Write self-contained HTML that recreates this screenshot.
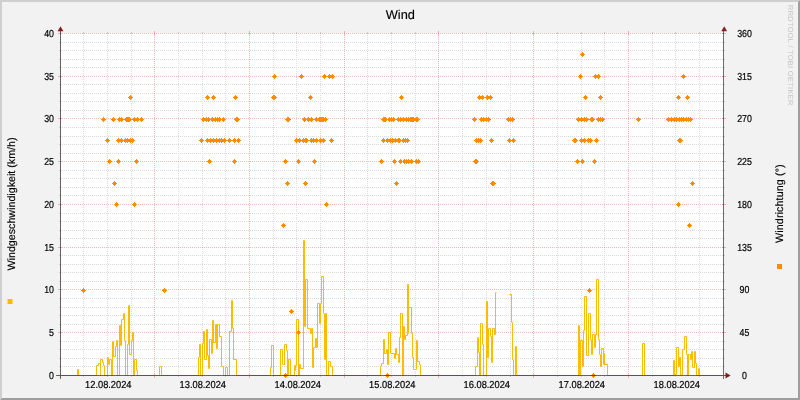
<!DOCTYPE html>
<html lang="de"><head><meta charset="utf-8"><title>Wind</title>
<style>
html,body{margin:0;padding:0;background:#f2f2f2;}
body{width:800px;height:400px;overflow:hidden;}
svg{display:block;transform:translateZ(0);will-change:transform;}
text{font-family:"Liberation Sans", Arial, sans-serif;fill:#000;text-rendering:geometricPrecision;}
.ax{font-size:10.15px;stroke:#000;stroke-width:0.2px;}
.ti{font-size:12.8px;stroke:#000;stroke-width:0.15px;}
.un{font-size:10.7px;stroke:#000;stroke-width:0.15px;}
.wm{font-size:7.4px;fill:#c4c4c4;letter-spacing:0.33px;}
</style></head>
<body>
<svg width="800" height="400" viewBox="0 0 800 400">
<rect x="0" y="0" width="800" height="400" fill="#f2f2f2"/>
<path d="M0 0H800L798 2H2V398L0 400Z" fill="#cfcfcf"/>
<path d="M800 400H0L2 398H798V2L800 0Z" fill="#9e9e9e"/>
<rect x="60" y="33" width="664" height="343" fill="#ffffff"/>
<g shape-rendering="crispEdges" fill="none" stroke-width="1">
<path d="M60.0 366.5H724.0M60.0 358.5H724.0M60.0 349.5H724.0M60.0 341.5H724.0M60.0 324.5H724.0M60.0 315.5H724.0M60.0 307.5H724.0M60.0 298.5H724.0M60.0 281.5H724.0M60.0 272.5H724.0M60.0 264.5H724.0M60.0 255.5H724.0M60.0 238.5H724.0M60.0 230.5H724.0M60.0 221.5H724.0M60.0 213.5H724.0M60.0 195.5H724.0M60.0 187.5H724.0M60.0 178.5H724.0M60.0 170.5H724.0M60.0 153.5H724.0M60.0 144.5H724.0M60.0 136.5H724.0M60.0 127.5H724.0M60.0 110.5H724.0M60.0 101.5H724.0M60.0 93.5H724.0M60.0 84.5H724.0M60.0 67.5H724.0M60.0 59.5H724.0M60.0 50.5H724.0M60.0 42.5H724.0M83.5 33.0V376.0M107.5 33.0V376.0M131.5 33.0V376.0M178.5 33.0V376.0M202.5 33.0V376.0M225.5 33.0V376.0M273.5 33.0V376.0M296.5 33.0V376.0M320.5 33.0V376.0M367.5 33.0V376.0M391.5 33.0V376.0M415.5 33.0V376.0M462.5 33.0V376.0M486.5 33.0V376.0M510.5 33.0V376.0M557.5 33.0V376.0M581.5 33.0V376.0M604.5 33.0V376.0M652.5 33.0V376.0M675.5 33.0V376.0M699.5 33.0V376.0" stroke="#8f8f8f" stroke-opacity="0.31" stroke-dasharray="1 1"/>
<path d="M60.0 375.5H724.0M60.0 332.5H724.0M60.0 289.5H724.0M60.0 247.5H724.0M60.0 204.5H724.0M60.0 161.5H724.0M60.0 118.5H724.0M60.0 76.5H724.0M60.0 33.5H724.0M60.5 33.0V376.0M154.5 33.0V376.0M249.5 33.0V376.0M344.5 33.0V376.0M438.5 33.0V376.0M533.5 33.0V376.0M628.5 33.0V376.0" stroke="#de4f4f" stroke-opacity="0.40" stroke-dasharray="1 1"/>
<path d="M59.0 366.5h2M723.0 366.5h2M59.0 358.5h2M723.0 358.5h2M59.0 349.5h2M723.0 349.5h2M59.0 341.5h2M723.0 341.5h2M59.0 324.5h2M723.0 324.5h2M59.0 315.5h2M723.0 315.5h2M59.0 307.5h2M723.0 307.5h2M59.0 298.5h2M723.0 298.5h2M59.0 281.5h2M723.0 281.5h2M59.0 272.5h2M723.0 272.5h2M59.0 264.5h2M723.0 264.5h2M59.0 255.5h2M723.0 255.5h2M59.0 238.5h2M723.0 238.5h2M59.0 230.5h2M723.0 230.5h2M59.0 221.5h2M723.0 221.5h2M59.0 213.5h2M723.0 213.5h2M59.0 195.5h2M723.0 195.5h2M59.0 187.5h2M723.0 187.5h2M59.0 178.5h2M723.0 178.5h2M59.0 170.5h2M723.0 170.5h2M59.0 153.5h2M723.0 153.5h2M59.0 144.5h2M723.0 144.5h2M59.0 136.5h2M723.0 136.5h2M59.0 127.5h2M723.0 127.5h2M59.0 110.5h2M723.0 110.5h2M59.0 101.5h2M723.0 101.5h2M59.0 93.5h2M723.0 93.5h2M59.0 84.5h2M723.0 84.5h2M59.0 67.5h2M723.0 67.5h2M59.0 59.5h2M723.0 59.5h2M59.0 50.5h2M723.0 50.5h2M59.0 42.5h2M723.0 42.5h2M83.5 32.0v2M83.5 375.0v2M107.5 32.0v2M107.5 375.0v2M131.5 32.0v2M131.5 375.0v2M178.5 32.0v2M178.5 375.0v2M202.5 32.0v2M202.5 375.0v2M225.5 32.0v2M225.5 375.0v2M273.5 32.0v2M273.5 375.0v2M296.5 32.0v2M296.5 375.0v2M320.5 32.0v2M320.5 375.0v2M367.5 32.0v2M367.5 375.0v2M391.5 32.0v2M391.5 375.0v2M415.5 32.0v2M415.5 375.0v2M462.5 32.0v2M462.5 375.0v2M486.5 32.0v2M486.5 375.0v2M510.5 32.0v2M510.5 375.0v2M557.5 32.0v2M557.5 375.0v2M581.5 32.0v2M581.5 375.0v2M604.5 32.0v2M604.5 375.0v2M652.5 32.0v2M652.5 375.0v2M675.5 32.0v2M675.5 375.0v2M699.5 32.0v2M699.5 375.0v2" stroke="#8f8f8f" stroke-opacity="0.34"/>
<path d="M58.0 375.5h4M722.0 375.5h4M58.0 332.5h4M722.0 332.5h4M58.0 289.5h4M722.0 289.5h4M58.0 247.5h4M722.0 247.5h4M58.0 204.5h4M722.0 204.5h4M58.0 161.5h4M722.0 161.5h4M58.0 118.5h4M722.0 118.5h4M58.0 76.5h4M722.0 76.5h4M58.0 33.5h4M722.0 33.5h4M60.5 31.0v4M60.5 374.0v4M154.5 31.0v4M154.5 374.0v4M249.5 31.0v4M249.5 374.0v4M344.5 31.0v4M344.5 374.0v4M438.5 31.0v4M438.5 374.0v4M533.5 31.0v4M533.5 374.0v4M628.5 31.0v4M628.5 374.0v4" stroke="#de4f4f" stroke-opacity="0.40"/>
</g>
<path d="M60.50 375.50 L77.50 375.50 L77.50 369.50 L78.50 369.50 L78.50 375.50 L96.50 375.50 L96.50 365.50 L98.50 365.50 L98.50 363.50 L100.50 363.50 L100.50 375.50 L100.50 375.50 L100.50 359.50 L102.50 359.50 L102.50 362.50 L103.50 362.50 L103.50 365.50 L104.50 365.50 L104.50 375.50 L107.50 375.50 L107.50 357.50 L108.50 357.50 L108.50 364.50 L109.50 364.50 L109.50 359.50 L111.50 359.50 L111.50 375.50 L112.50 375.50 L112.50 341.50 L113.50 341.50 L113.50 356.50 L115.50 356.50 L115.50 346.50 L116.50 346.50 L116.50 340.50 L117.50 340.50 L117.50 375.50 L119.50 375.50 L119.50 325.50 L120.50 325.50 L120.50 345.50 L121.50 345.50 L121.50 319.50 L123.50 319.50 L123.50 313.50 L124.50 313.50 L124.50 340.50 L125.50 340.50 L125.50 375.50 L127.50 375.50 L127.50 344.50 L128.50 344.50 L128.50 305.50 L129.50 305.50 L129.50 354.50 L131.50 354.50 L131.50 340.50 L132.50 340.50 L132.50 332.50 L133.50 332.50 L133.50 375.50 L134.50 375.50 L134.50 359.50 L136.50 359.50 L136.50 370.50 L137.50 370.50 L137.50 375.50 L159.50 375.50 L159.50 366.50 L161.50 366.50 L161.50 375.50 L198.50 375.50 L198.50 357.50 L199.50 357.50 L199.50 344.50 L200.50 344.50 L200.50 375.50 L202.50 375.50 L202.50 343.50 L203.50 343.50 L203.50 331.50 L204.50 331.50 L204.50 359.50 L206.50 359.50 L206.50 329.50 L207.50 329.50 L207.50 355.50 L208.50 355.50 L208.50 368.50 L209.50 368.50 L209.50 339.50 L211.50 339.50 L211.50 353.50 L212.50 353.50 L212.50 320.50 L213.50 320.50 L213.50 342.50 L215.50 342.50 L215.50 324.50 L216.50 324.50 L216.50 348.50 L217.50 348.50 L217.50 324.50 L219.50 324.50 L219.50 336.50 L221.50 336.50 L221.50 349.50 L221.50 349.50 L221.50 366.50 L223.50 366.50 L223.50 375.50 L225.50 375.50 L225.50 367.50 L227.50 367.50 L227.50 375.50 L229.50 375.50 L229.50 331.50 L231.50 331.50 L231.50 300.50 L232.50 300.50 L232.50 328.50 L233.50 328.50 L233.50 359.50 L236.50 359.50 L236.50 375.50 L270.50 375.50 L270.50 367.50 L271.50 367.50 L271.50 345.50 L273.50 345.50 L273.50 375.50 L280.50 375.50 L280.50 349.50 L282.50 349.50 L282.50 364.50 L284.50 364.50 L284.50 344.50 L286.50 344.50 L286.50 350.50 L287.50 350.50 L287.50 375.50 L288.50 375.50 L288.50 359.50 L290.50 359.50 L290.50 375.50 L294.50 375.50 L294.50 365.50 L295.50 365.50 L295.50 370.50 L295.50 370.50 L295.50 365.50 L296.50 365.50 L296.50 319.50 L298.50 319.50 L298.50 375.50 L299.50 375.50 L299.50 364.50 L300.50 364.50 L300.50 368.50 L303.50 368.50 L303.50 240.50 L304.50 240.50 L304.50 326.50 L305.50 326.50 L305.50 279.50 L307.50 279.50 L307.50 328.50 L310.50 328.50 L310.50 333.50 L311.50 333.50 L311.50 328.50 L312.50 328.50 L312.50 367.50 L313.50 367.50 L313.50 347.50 L315.50 347.50 L315.50 338.50 L316.50 338.50 L316.50 347.50 L317.50 347.50 L317.50 303.50 L319.50 303.50 L319.50 323.50 L320.50 323.50 L320.50 303.50 L321.50 303.50 L321.50 276.50 L323.50 276.50 L323.50 313.50 L324.50 313.50 L324.50 359.50 L325.50 359.50 L325.50 313.50 L326.50 313.50 L326.50 375.50 L328.50 375.50 L328.50 366.50 L328.50 366.50 L328.50 361.50 L330.50 361.50 L330.50 366.50 L332.50 366.50 L332.50 375.50 L380.50 375.50 L380.50 366.50 L381.50 366.50 L381.50 363.50 L383.50 363.50 L383.50 339.50 L384.50 339.50 L384.50 353.50 L386.50 353.50 L386.50 349.50 L387.50 349.50 L387.50 364.50 L388.50 364.50 L388.50 332.50 L390.50 332.50 L390.50 353.50 L394.50 353.50 L394.50 358.50 L395.50 358.50 L395.50 348.50 L396.50 348.50 L396.50 354.50 L398.50 354.50 L398.50 362.50 L399.50 362.50 L399.50 337.50 L400.50 337.50 L400.50 313.50 L402.50 313.50 L402.50 375.50 L403.50 375.50 L403.50 326.50 L404.50 326.50 L404.50 339.50 L405.50 339.50 L405.50 335.50 L407.50 335.50 L407.50 284.50 L408.50 284.50 L408.50 333.50 L408.50 333.50 L408.50 307.50 L411.50 307.50 L411.50 333.50 L412.50 333.50 L412.50 357.50 L413.50 357.50 L413.50 369.50 L416.50 369.50 L416.50 340.50 L417.50 340.50 L417.50 361.50 L419.50 361.50 L419.50 364.50 L420.50 364.50 L420.50 375.50 L475.50 375.50 L475.50 366.50 L477.50 366.50 L477.50 337.50 L478.50 337.50 L478.50 352.50 L479.50 352.50 L479.50 375.50 L480.50 375.50 L480.50 323.50 L482.50 323.50 L482.50 344.50 L483.50 344.50 L483.50 375.50 L486.50 375.50 L486.50 301.50 L487.50 301.50 L487.50 357.50 L488.50 357.50 L488.50 328.50 L490.50 328.50 L490.50 336.50 L491.50 336.50 L491.50 362.50 L492.50 362.50 L492.50 328.50 L494.50 328.50 L494.50 334.50 L495.50 334.50 L495.50 292.50 L496.50 292.50 M509.50 294.50 L511.50 294.50 L511.50 322.50 L512.50 322.50 L512.50 359.50 L513.50 359.50 L513.50 375.50 L515.50 375.50 L515.50 346.50 L516.50 346.50 L516.50 374.50 L517.50 374.50 L517.50 375.50 L578.50 375.50 L578.50 325.50 L579.50 325.50 L579.50 375.50 L580.50 375.50 L580.50 340.50 L582.50 340.50 L582.50 366.50 L583.50 366.50 L583.50 330.50 L584.50 330.50 L584.50 296.50 L586.50 296.50 L586.50 355.50 L588.50 355.50 L588.50 313.50 L590.50 313.50 L590.50 339.50 L591.50 339.50 L591.50 354.50 L592.50 354.50 L592.50 334.50 L594.50 334.50 L594.50 347.50 L595.50 347.50 L595.50 334.50 L596.50 334.50 L596.50 279.50 L598.50 279.50 L598.50 339.50 L599.50 339.50 L599.50 354.50 L600.50 354.50 L600.50 366.50 L601.50 366.50 L601.50 348.50 L603.50 348.50 L603.50 364.50 L604.50 364.50 L604.50 353.50 L604.50 353.50 L604.50 364.50 L607.50 364.50 L607.50 375.50 L642.50 375.50 L642.50 343.50 L644.50 343.50 L644.50 375.50 L673.50 375.50 L673.50 360.50 L674.50 360.50 L674.50 374.50 L676.50 374.50 L676.50 347.50 L678.50 347.50 L678.50 366.50 L679.50 366.50 L679.50 357.50 L680.50 357.50 L680.50 374.50 L682.50 374.50 L682.50 354.50 L682.50 354.50 L682.50 349.50 L684.50 349.50 L684.50 336.50 L686.50 336.50 L686.50 354.50 L687.50 354.50 L687.50 375.50 L688.50 375.50 L688.50 354.50 L690.50 354.50 L690.50 359.50 L691.50 359.50 L691.50 351.50 L692.50 351.50 L692.50 367.50 L694.50 367.50 L694.50 351.50 L695.50 351.50 L695.50 363.50 L696.50 363.50 L696.50 375.50 L698.50 375.50 L698.50 368.50 L699.50 368.50 L699.50 375.50 L723.50 375.50" fill="none" stroke="#ffbb00" stroke-width="1" stroke-linejoin="miter" stroke-linecap="butt"/>
<path d="M580.0 54.0h5v1h-5zM581.0 53.0h3v3h-3zM582.0 52.0h1v5h-1zM272.0 76.0h5v1h-5zM273.0 75.0h3v3h-3zM274.0 74.0h1v5h-1zM299.0 76.0h5v1h-5zM300.0 75.0h3v3h-3zM301.0 74.0h1v5h-1zM322.0 76.0h5v1h-5zM323.0 75.0h3v3h-3zM324.0 74.0h1v5h-1zM327.0 76.0h5v1h-5zM328.0 75.0h3v3h-3zM329.0 74.0h1v5h-1zM330.0 76.0h5v1h-5zM331.0 75.0h3v3h-3zM332.0 74.0h1v5h-1zM578.0 76.0h5v1h-5zM579.0 75.0h3v3h-3zM580.0 74.0h1v5h-1zM593.0 76.0h5v1h-5zM594.0 75.0h3v3h-3zM595.0 74.0h1v5h-1zM596.0 76.0h5v1h-5zM597.0 75.0h3v3h-3zM598.0 74.0h1v5h-1zM681.0 76.0h5v1h-5zM682.0 75.0h3v3h-3zM683.0 74.0h1v5h-1zM128.0 97.0h5v1h-5zM129.0 96.0h3v3h-3zM130.0 95.0h1v5h-1zM205.0 97.0h5v1h-5zM206.0 96.0h3v3h-3zM207.0 95.0h1v5h-1zM211.0 97.0h5v1h-5zM212.0 96.0h3v3h-3zM213.0 95.0h1v5h-1zM233.0 97.0h5v1h-5zM234.0 96.0h3v3h-3zM235.0 95.0h1v5h-1zM271.0 97.0h5v1h-5zM272.0 96.0h3v3h-3zM273.0 95.0h1v5h-1zM272.0 97.0h5v1h-5zM273.0 96.0h3v3h-3zM274.0 95.0h1v5h-1zM308.0 97.0h5v1h-5zM309.0 96.0h3v3h-3zM310.0 95.0h1v5h-1zM399.0 97.0h5v1h-5zM400.0 96.0h3v3h-3zM401.0 95.0h1v5h-1zM477.0 97.0h5v1h-5zM478.0 96.0h3v3h-3zM479.0 95.0h1v5h-1zM480.0 97.0h5v1h-5zM481.0 96.0h3v3h-3zM482.0 95.0h1v5h-1zM485.0 97.0h5v1h-5zM486.0 96.0h3v3h-3zM487.0 95.0h1v5h-1zM488.0 97.0h5v1h-5zM489.0 96.0h3v3h-3zM490.0 95.0h1v5h-1zM583.0 97.0h5v1h-5zM584.0 96.0h3v3h-3zM585.0 95.0h1v5h-1zM598.0 97.0h5v1h-5zM599.0 96.0h3v3h-3zM600.0 95.0h1v5h-1zM676.0 97.0h5v1h-5zM677.0 96.0h3v3h-3zM678.0 95.0h1v5h-1zM685.0 97.0h5v1h-5zM686.0 96.0h3v3h-3zM687.0 95.0h1v5h-1zM101.0 119.0h5v1h-5zM102.0 118.0h3v3h-3zM103.0 117.0h1v5h-1zM111.0 119.0h5v1h-5zM112.0 118.0h3v3h-3zM113.0 117.0h1v5h-1zM117.0 119.0h5v1h-5zM118.0 118.0h3v3h-3zM119.0 117.0h1v5h-1zM119.0 119.0h5v1h-5zM120.0 118.0h3v3h-3zM121.0 117.0h1v5h-1zM124.0 119.0h5v1h-5zM125.0 118.0h3v3h-3zM126.0 117.0h1v5h-1zM125.0 119.0h5v1h-5zM126.0 118.0h3v3h-3zM127.0 117.0h1v5h-1zM126.0 119.0h5v1h-5zM127.0 118.0h3v3h-3zM128.0 117.0h1v5h-1zM127.0 119.0h5v1h-5zM128.0 118.0h3v3h-3zM129.0 117.0h1v5h-1zM132.0 119.0h5v1h-5zM133.0 118.0h3v3h-3zM134.0 117.0h1v5h-1zM135.0 119.0h5v1h-5zM136.0 118.0h3v3h-3zM137.0 117.0h1v5h-1zM139.0 119.0h5v1h-5zM140.0 118.0h3v3h-3zM141.0 117.0h1v5h-1zM201.0 119.0h5v1h-5zM202.0 118.0h3v3h-3zM203.0 117.0h1v5h-1zM204.0 119.0h5v1h-5zM205.0 118.0h3v3h-3zM206.0 117.0h1v5h-1zM206.0 119.0h5v1h-5zM207.0 118.0h3v3h-3zM208.0 117.0h1v5h-1zM210.0 119.0h5v1h-5zM211.0 118.0h3v3h-3zM212.0 117.0h1v5h-1zM213.0 119.0h5v1h-5zM214.0 118.0h3v3h-3zM215.0 117.0h1v5h-1zM215.0 119.0h5v1h-5zM216.0 118.0h3v3h-3zM217.0 117.0h1v5h-1zM217.0 119.0h5v1h-5zM218.0 118.0h3v3h-3zM219.0 117.0h1v5h-1zM221.0 119.0h5v1h-5zM222.0 118.0h3v3h-3zM223.0 117.0h1v5h-1zM234.0 119.0h5v1h-5zM235.0 118.0h3v3h-3zM236.0 117.0h1v5h-1zM235.0 119.0h5v1h-5zM236.0 118.0h3v3h-3zM237.0 117.0h1v5h-1zM285.0 119.0h5v1h-5zM286.0 118.0h3v3h-3zM287.0 117.0h1v5h-1zM286.0 119.0h5v1h-5zM287.0 118.0h3v3h-3zM288.0 117.0h1v5h-1zM302.0 119.0h5v1h-5zM303.0 118.0h3v3h-3zM304.0 117.0h1v5h-1zM306.0 119.0h5v1h-5zM307.0 118.0h3v3h-3zM308.0 117.0h1v5h-1zM309.0 119.0h5v1h-5zM310.0 118.0h3v3h-3zM311.0 117.0h1v5h-1zM314.0 119.0h5v1h-5zM315.0 118.0h3v3h-3zM316.0 117.0h1v5h-1zM317.0 119.0h5v1h-5zM318.0 118.0h3v3h-3zM319.0 117.0h1v5h-1zM318.0 119.0h5v1h-5zM319.0 118.0h3v3h-3zM320.0 117.0h1v5h-1zM319.0 119.0h5v1h-5zM320.0 118.0h3v3h-3zM321.0 117.0h1v5h-1zM320.0 119.0h5v1h-5zM321.0 118.0h3v3h-3zM322.0 117.0h1v5h-1zM321.0 119.0h5v1h-5zM322.0 118.0h3v3h-3zM323.0 117.0h1v5h-1zM323.0 119.0h5v1h-5zM324.0 118.0h3v3h-3zM325.0 117.0h1v5h-1zM381.0 119.0h5v1h-5zM382.0 118.0h3v3h-3zM383.0 117.0h1v5h-1zM382.0 119.0h5v1h-5zM383.0 118.0h3v3h-3zM384.0 117.0h1v5h-1zM383.0 119.0h5v1h-5zM384.0 118.0h3v3h-3zM385.0 117.0h1v5h-1zM387.0 119.0h5v1h-5zM388.0 118.0h3v3h-3zM389.0 117.0h1v5h-1zM389.0 119.0h5v1h-5zM390.0 118.0h3v3h-3zM391.0 117.0h1v5h-1zM391.0 119.0h5v1h-5zM392.0 118.0h3v3h-3zM393.0 117.0h1v5h-1zM396.0 119.0h5v1h-5zM397.0 118.0h3v3h-3zM398.0 117.0h1v5h-1zM398.0 119.0h5v1h-5zM399.0 118.0h3v3h-3zM400.0 117.0h1v5h-1zM401.0 119.0h5v1h-5zM402.0 118.0h3v3h-3zM403.0 117.0h1v5h-1zM404.0 119.0h5v1h-5zM405.0 118.0h3v3h-3zM406.0 117.0h1v5h-1zM406.0 119.0h5v1h-5zM407.0 118.0h3v3h-3zM408.0 117.0h1v5h-1zM408.0 119.0h5v1h-5zM409.0 118.0h3v3h-3zM410.0 117.0h1v5h-1zM409.0 119.0h5v1h-5zM410.0 118.0h3v3h-3zM411.0 117.0h1v5h-1zM410.0 119.0h5v1h-5zM411.0 118.0h3v3h-3zM412.0 117.0h1v5h-1zM411.0 119.0h5v1h-5zM412.0 118.0h3v3h-3zM413.0 117.0h1v5h-1zM414.0 119.0h5v1h-5zM415.0 118.0h3v3h-3zM416.0 117.0h1v5h-1zM415.0 119.0h5v1h-5zM416.0 118.0h3v3h-3zM417.0 117.0h1v5h-1zM472.0 119.0h5v1h-5zM473.0 118.0h3v3h-3zM474.0 117.0h1v5h-1zM479.0 119.0h5v1h-5zM480.0 118.0h3v3h-3zM481.0 117.0h1v5h-1zM481.0 119.0h5v1h-5zM482.0 118.0h3v3h-3zM483.0 117.0h1v5h-1zM484.0 119.0h5v1h-5zM485.0 118.0h3v3h-3zM486.0 117.0h1v5h-1zM486.0 119.0h5v1h-5zM487.0 118.0h3v3h-3zM488.0 117.0h1v5h-1zM506.0 119.0h5v1h-5zM507.0 118.0h3v3h-3zM508.0 117.0h1v5h-1zM508.0 119.0h5v1h-5zM509.0 118.0h3v3h-3zM510.0 117.0h1v5h-1zM510.0 119.0h5v1h-5zM511.0 118.0h3v3h-3zM512.0 117.0h1v5h-1zM576.0 119.0h5v1h-5zM577.0 118.0h3v3h-3zM578.0 117.0h1v5h-1zM579.0 119.0h5v1h-5zM580.0 118.0h3v3h-3zM581.0 117.0h1v5h-1zM582.0 119.0h5v1h-5zM583.0 118.0h3v3h-3zM584.0 117.0h1v5h-1zM584.0 119.0h5v1h-5zM585.0 118.0h3v3h-3zM586.0 117.0h1v5h-1zM589.0 119.0h5v1h-5zM590.0 118.0h3v3h-3zM591.0 117.0h1v5h-1zM590.0 119.0h5v1h-5zM591.0 118.0h3v3h-3zM592.0 117.0h1v5h-1zM596.0 119.0h5v1h-5zM597.0 118.0h3v3h-3zM598.0 117.0h1v5h-1zM598.0 119.0h5v1h-5zM599.0 118.0h3v3h-3zM600.0 117.0h1v5h-1zM600.0 119.0h5v1h-5zM601.0 118.0h3v3h-3zM602.0 117.0h1v5h-1zM636.0 119.0h5v1h-5zM637.0 118.0h3v3h-3zM638.0 117.0h1v5h-1zM666.0 119.0h5v1h-5zM667.0 118.0h3v3h-3zM668.0 117.0h1v5h-1zM669.0 119.0h5v1h-5zM670.0 118.0h3v3h-3zM671.0 117.0h1v5h-1zM672.0 119.0h5v1h-5zM673.0 118.0h3v3h-3zM674.0 117.0h1v5h-1zM674.0 119.0h5v1h-5zM675.0 118.0h3v3h-3zM676.0 117.0h1v5h-1zM677.0 119.0h5v1h-5zM678.0 118.0h3v3h-3zM679.0 117.0h1v5h-1zM679.0 119.0h5v1h-5zM680.0 118.0h3v3h-3zM681.0 117.0h1v5h-1zM681.0 119.0h5v1h-5zM682.0 118.0h3v3h-3zM683.0 117.0h1v5h-1zM684.0 119.0h5v1h-5zM685.0 118.0h3v3h-3zM686.0 117.0h1v5h-1zM686.0 119.0h5v1h-5zM687.0 118.0h3v3h-3zM688.0 117.0h1v5h-1zM688.0 119.0h5v1h-5zM689.0 118.0h3v3h-3zM690.0 117.0h1v5h-1zM105.0 140.0h5v1h-5zM106.0 139.0h3v3h-3zM107.0 138.0h1v5h-1zM116.0 140.0h5v1h-5zM117.0 139.0h3v3h-3zM118.0 138.0h1v5h-1zM119.0 140.0h5v1h-5zM120.0 139.0h3v3h-3zM121.0 138.0h1v5h-1zM123.0 140.0h5v1h-5zM124.0 139.0h3v3h-3zM125.0 138.0h1v5h-1zM125.0 140.0h5v1h-5zM126.0 139.0h3v3h-3zM127.0 138.0h1v5h-1zM128.0 140.0h5v1h-5zM129.0 139.0h3v3h-3zM130.0 138.0h1v5h-1zM130.0 140.0h5v1h-5zM131.0 139.0h3v3h-3zM132.0 138.0h1v5h-1zM199.0 140.0h5v1h-5zM200.0 139.0h3v3h-3zM201.0 138.0h1v5h-1zM205.0 140.0h5v1h-5zM206.0 139.0h3v3h-3zM207.0 138.0h1v5h-1zM208.0 140.0h5v1h-5zM209.0 139.0h3v3h-3zM210.0 138.0h1v5h-1zM211.0 140.0h5v1h-5zM212.0 139.0h3v3h-3zM213.0 138.0h1v5h-1zM214.0 140.0h5v1h-5zM215.0 139.0h3v3h-3zM216.0 138.0h1v5h-1zM217.0 140.0h5v1h-5zM218.0 139.0h3v3h-3zM219.0 138.0h1v5h-1zM219.0 140.0h5v1h-5zM220.0 139.0h3v3h-3zM221.0 138.0h1v5h-1zM222.0 140.0h5v1h-5zM223.0 139.0h3v3h-3zM224.0 138.0h1v5h-1zM227.0 140.0h5v1h-5zM228.0 139.0h3v3h-3zM229.0 138.0h1v5h-1zM232.0 140.0h5v1h-5zM233.0 139.0h3v3h-3zM234.0 138.0h1v5h-1zM236.0 140.0h5v1h-5zM237.0 139.0h3v3h-3zM238.0 138.0h1v5h-1zM294.0 140.0h5v1h-5zM295.0 139.0h3v3h-3zM296.0 138.0h1v5h-1zM297.0 140.0h5v1h-5zM298.0 139.0h3v3h-3zM299.0 138.0h1v5h-1zM301.0 140.0h5v1h-5zM302.0 139.0h3v3h-3zM303.0 138.0h1v5h-1zM303.0 140.0h5v1h-5zM304.0 139.0h3v3h-3zM305.0 138.0h1v5h-1zM304.0 140.0h5v1h-5zM305.0 139.0h3v3h-3zM306.0 138.0h1v5h-1zM309.0 140.0h5v1h-5zM310.0 139.0h3v3h-3zM311.0 138.0h1v5h-1zM311.0 140.0h5v1h-5zM312.0 139.0h3v3h-3zM313.0 138.0h1v5h-1zM314.0 140.0h5v1h-5zM315.0 139.0h3v3h-3zM316.0 138.0h1v5h-1zM318.0 140.0h5v1h-5zM319.0 139.0h3v3h-3zM320.0 138.0h1v5h-1zM321.0 140.0h5v1h-5zM322.0 139.0h3v3h-3zM323.0 138.0h1v5h-1zM329.0 140.0h5v1h-5zM330.0 139.0h3v3h-3zM331.0 138.0h1v5h-1zM381.0 140.0h5v1h-5zM382.0 139.0h3v3h-3zM383.0 138.0h1v5h-1zM385.0 140.0h5v1h-5zM386.0 139.0h3v3h-3zM387.0 138.0h1v5h-1zM388.0 140.0h5v1h-5zM389.0 139.0h3v3h-3zM390.0 138.0h1v5h-1zM390.0 140.0h5v1h-5zM391.0 139.0h3v3h-3zM392.0 138.0h1v5h-1zM393.0 140.0h5v1h-5zM394.0 139.0h3v3h-3zM395.0 138.0h1v5h-1zM396.0 140.0h5v1h-5zM397.0 139.0h3v3h-3zM398.0 138.0h1v5h-1zM397.0 140.0h5v1h-5zM398.0 139.0h3v3h-3zM399.0 138.0h1v5h-1zM401.0 140.0h5v1h-5zM402.0 139.0h3v3h-3zM403.0 138.0h1v5h-1zM403.0 140.0h5v1h-5zM404.0 139.0h3v3h-3zM405.0 138.0h1v5h-1zM405.0 140.0h5v1h-5zM406.0 139.0h3v3h-3zM407.0 138.0h1v5h-1zM474.0 140.0h5v1h-5zM475.0 139.0h3v3h-3zM476.0 138.0h1v5h-1zM476.0 140.0h5v1h-5zM477.0 139.0h3v3h-3zM478.0 138.0h1v5h-1zM478.0 140.0h5v1h-5zM479.0 139.0h3v3h-3zM480.0 138.0h1v5h-1zM489.0 140.0h5v1h-5zM490.0 139.0h3v3h-3zM491.0 138.0h1v5h-1zM507.0 140.0h5v1h-5zM508.0 139.0h3v3h-3zM509.0 138.0h1v5h-1zM511.0 140.0h5v1h-5zM512.0 139.0h3v3h-3zM513.0 138.0h1v5h-1zM572.0 140.0h5v1h-5zM573.0 139.0h3v3h-3zM574.0 138.0h1v5h-1zM573.0 140.0h5v1h-5zM574.0 139.0h3v3h-3zM575.0 138.0h1v5h-1zM579.0 140.0h5v1h-5zM580.0 139.0h3v3h-3zM581.0 138.0h1v5h-1zM582.0 140.0h5v1h-5zM583.0 139.0h3v3h-3zM584.0 138.0h1v5h-1zM586.0 140.0h5v1h-5zM587.0 139.0h3v3h-3zM588.0 138.0h1v5h-1zM588.0 140.0h5v1h-5zM589.0 139.0h3v3h-3zM590.0 138.0h1v5h-1zM594.0 140.0h5v1h-5zM595.0 139.0h3v3h-3zM596.0 138.0h1v5h-1zM677.0 140.0h5v1h-5zM678.0 139.0h3v3h-3zM679.0 138.0h1v5h-1zM678.0 140.0h5v1h-5zM679.0 139.0h3v3h-3zM680.0 138.0h1v5h-1zM107.0 161.0h5v1h-5zM108.0 160.0h3v3h-3zM109.0 159.0h1v5h-1zM116.0 161.0h5v1h-5zM117.0 160.0h3v3h-3zM118.0 159.0h1v5h-1zM134.0 161.0h5v1h-5zM135.0 160.0h3v3h-3zM136.0 159.0h1v5h-1zM207.0 161.0h5v1h-5zM208.0 160.0h3v3h-3zM209.0 159.0h1v5h-1zM232.0 161.0h5v1h-5zM233.0 160.0h3v3h-3zM234.0 159.0h1v5h-1zM283.0 161.0h5v1h-5zM284.0 160.0h3v3h-3zM285.0 159.0h1v5h-1zM296.0 161.0h5v1h-5zM297.0 160.0h3v3h-3zM298.0 159.0h1v5h-1zM312.0 161.0h5v1h-5zM313.0 160.0h3v3h-3zM314.0 159.0h1v5h-1zM379.0 161.0h5v1h-5zM380.0 160.0h3v3h-3zM381.0 159.0h1v5h-1zM392.0 161.0h5v1h-5zM393.0 160.0h3v3h-3zM394.0 159.0h1v5h-1zM398.0 161.0h5v1h-5zM399.0 160.0h3v3h-3zM400.0 159.0h1v5h-1zM402.0 161.0h5v1h-5zM403.0 160.0h3v3h-3zM404.0 159.0h1v5h-1zM404.0 161.0h5v1h-5zM405.0 160.0h3v3h-3zM406.0 159.0h1v5h-1zM406.0 161.0h5v1h-5zM407.0 160.0h3v3h-3zM408.0 159.0h1v5h-1zM409.0 161.0h5v1h-5zM410.0 160.0h3v3h-3zM411.0 159.0h1v5h-1zM414.0 161.0h5v1h-5zM415.0 160.0h3v3h-3zM416.0 159.0h1v5h-1zM416.0 161.0h5v1h-5zM417.0 160.0h3v3h-3zM418.0 159.0h1v5h-1zM473.0 161.0h5v1h-5zM474.0 160.0h3v3h-3zM475.0 159.0h1v5h-1zM474.0 161.0h5v1h-5zM475.0 160.0h3v3h-3zM476.0 159.0h1v5h-1zM575.0 161.0h5v1h-5zM576.0 160.0h3v3h-3zM577.0 159.0h1v5h-1zM580.0 161.0h5v1h-5zM581.0 160.0h3v3h-3zM582.0 159.0h1v5h-1zM592.0 161.0h5v1h-5zM593.0 160.0h3v3h-3zM594.0 159.0h1v5h-1zM112.0 183.0h5v1h-5zM113.0 182.0h3v3h-3zM114.0 181.0h1v5h-1zM285.0 183.0h5v1h-5zM286.0 182.0h3v3h-3zM287.0 181.0h1v5h-1zM303.0 183.0h5v1h-5zM304.0 182.0h3v3h-3zM305.0 181.0h1v5h-1zM394.0 183.0h5v1h-5zM395.0 182.0h3v3h-3zM396.0 181.0h1v5h-1zM490.0 183.0h5v1h-5zM491.0 182.0h3v3h-3zM492.0 181.0h1v5h-1zM491.0 183.0h5v1h-5zM492.0 182.0h3v3h-3zM493.0 181.0h1v5h-1zM690.0 183.0h5v1h-5zM691.0 182.0h3v3h-3zM692.0 181.0h1v5h-1zM114.0 204.0h5v1h-5zM115.0 203.0h3v3h-3zM116.0 202.0h1v5h-1zM132.0 204.0h5v1h-5zM133.0 203.0h3v3h-3zM134.0 202.0h1v5h-1zM324.0 204.0h5v1h-5zM325.0 203.0h3v3h-3zM326.0 202.0h1v5h-1zM676.0 204.0h5v1h-5zM677.0 203.0h3v3h-3zM678.0 202.0h1v5h-1zM281.0 225.0h5v1h-5zM282.0 224.0h3v3h-3zM283.0 223.0h1v5h-1zM687.0 225.0h5v1h-5zM688.0 224.0h3v3h-3zM689.0 223.0h1v5h-1zM81.0 290.0h5v1h-5zM82.0 289.0h3v3h-3zM83.0 288.0h1v5h-1zM162.0 290.0h5v1h-5zM163.0 289.0h3v3h-3zM164.0 288.0h1v5h-1zM587.0 290.0h5v1h-5zM588.0 289.0h3v3h-3zM589.0 288.0h1v5h-1zM289.0 311.0h5v1h-5zM290.0 310.0h3v3h-3zM291.0 309.0h1v5h-1zM296.0 332.0h5v1h-5zM297.0 331.0h3v3h-3zM298.0 330.0h1v5h-1zM283.0 375.0h5v1h-5zM284.0 374.0h3v3h-3zM285.0 373.0h1v5h-1zM385.0 375.0h5v1h-5zM386.0 374.0h3v3h-3zM387.0 373.0h1v5h-1zM591.0 375.0h5v1h-5zM592.0 374.0h3v3h-3zM593.0 373.0h1v5h-1z" fill="#ff8c00" shape-rendering="crispEdges"/>
<g shape-rendering="crispEdges" fill="none" stroke="#1f1f1f" stroke-opacity="0.65" stroke-width="1">
<path d="M56 375.5H728M60.5 379V29M723.5 379V29"/>
</g>
<g fill="#801f1f">
<path d="M725.5 372.6V378.4L730.6 375.5Z"/>
<path d="M57.6 31.2H63.4L60.5 26.3Z"/>
<path d="M721.3 31.2H727.1L724.2 26.3Z"/>
</g>
<text x="400.3" y="19.4" text-anchor="middle" class="ti">Wind</text>
<text transform="translate(54 379.0) scale(0.870 1)" text-anchor="end" class="ax">0</text><text transform="translate(744.5 379.0) scale(0.870 1)" text-anchor="middle" class="ax">0</text><text transform="translate(54 336.0) scale(0.870 1)" text-anchor="end" class="ax">5</text><text transform="translate(744.5 336.0) scale(0.870 1)" text-anchor="middle" class="ax">45</text><text transform="translate(54 293.0) scale(0.870 1)" text-anchor="end" class="ax">10</text><text transform="translate(744.5 293.0) scale(0.870 1)" text-anchor="middle" class="ax">90</text><text transform="translate(54 251.0) scale(0.870 1)" text-anchor="end" class="ax">15</text><text transform="translate(744.5 251.0) scale(0.870 1)" text-anchor="middle" class="ax">135</text><text transform="translate(54 208.0) scale(0.870 1)" text-anchor="end" class="ax">20</text><text transform="translate(744.5 208.0) scale(0.870 1)" text-anchor="middle" class="ax">180</text><text transform="translate(54 165.0) scale(0.870 1)" text-anchor="end" class="ax">25</text><text transform="translate(744.5 165.0) scale(0.870 1)" text-anchor="middle" class="ax">225</text><text transform="translate(54 122.0) scale(0.870 1)" text-anchor="end" class="ax">30</text><text transform="translate(744.5 122.0) scale(0.870 1)" text-anchor="middle" class="ax">270</text><text transform="translate(54 80.0) scale(0.870 1)" text-anchor="end" class="ax">35</text><text transform="translate(744.5 80.0) scale(0.870 1)" text-anchor="middle" class="ax">315</text><text transform="translate(54 37.0) scale(0.870 1)" text-anchor="end" class="ax">40</text><text transform="translate(744.5 37.0) scale(0.870 1)" text-anchor="middle" class="ax">360</text><text transform="translate(108.3 388) scale(0.915 1)" text-anchor="middle" class="ax">12.08.2024</text><text transform="translate(202.8 388) scale(0.915 1)" text-anchor="middle" class="ax">13.08.2024</text><text transform="translate(297.8 388) scale(0.915 1)" text-anchor="middle" class="ax">14.08.2024</text><text transform="translate(392.3 388) scale(0.915 1)" text-anchor="middle" class="ax">15.08.2024</text><text transform="translate(486.8 388) scale(0.915 1)" text-anchor="middle" class="ax">16.08.2024</text><text transform="translate(581.8 388) scale(0.915 1)" text-anchor="middle" class="ax">17.08.2024</text><text transform="translate(676.8 388) scale(0.915 1)" text-anchor="middle" class="ax">18.08.2024</text>
<text transform="translate(14.5 204) rotate(-90)" text-anchor="middle" class="un">Windgeschwindigkeit (km/h)</text>
<text transform="translate(783.2 203.6) rotate(-90)" text-anchor="middle" class="un" letter-spacing="0.12">Windrichtung (°)</text>
<rect x="7.5" y="299" width="5" height="5" fill="#ffbb00"/>
<rect x="777" y="264" width="5" height="5" fill="#ff8c00"/>
<text transform="translate(788.3 5) rotate(90)" class="wm">RRDTOOL / TOBI OETIKER</text>
</svg>
</body></html>
